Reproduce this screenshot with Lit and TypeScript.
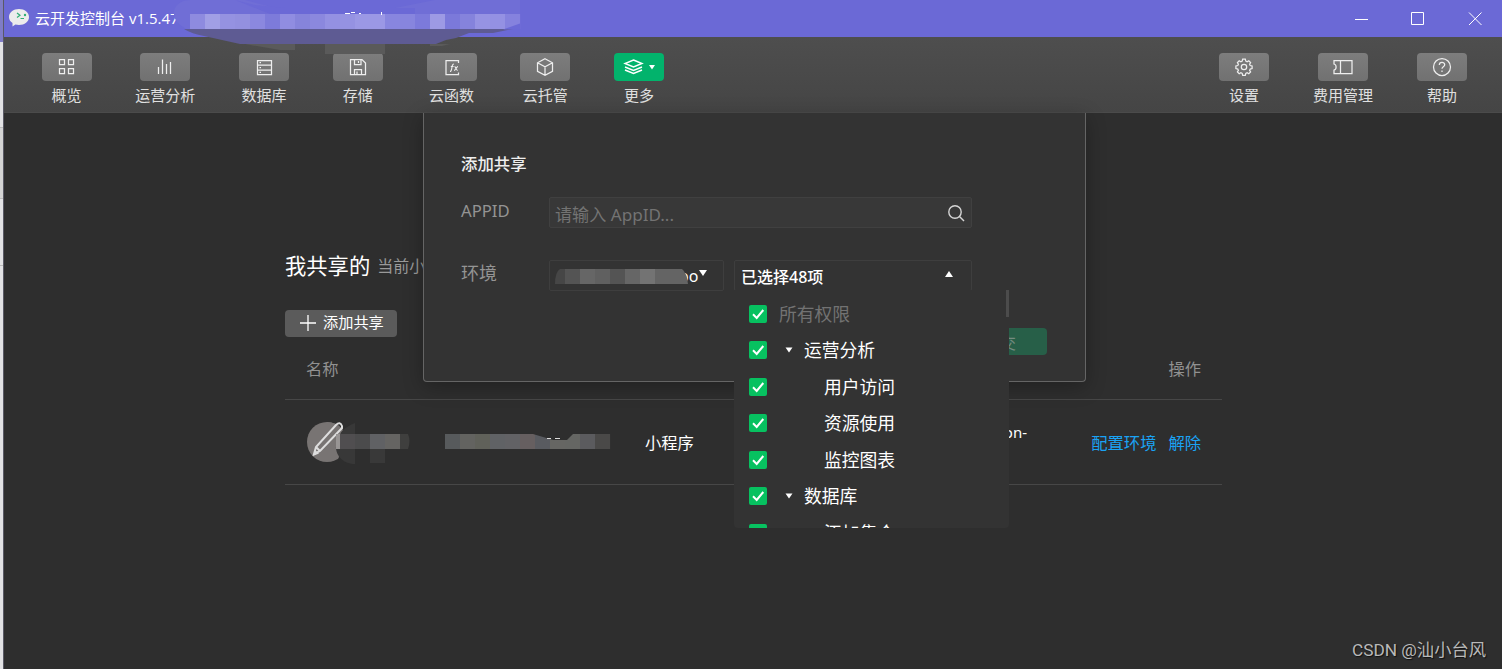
import { LitElement, html, css, svg } from "lit";
import { customElement, property } from "lit/decorators.js";
import { classMap } from "lit/directives/class-map.js";

const icons: Record<string, unknown> = {
  overview: svg`<path d="M4.500 4.500h5v5h-5zM13.500 4.500h5v5h-5zM4.500 13.500h5v5h-5zM13.500 13.500h5v5h-5z"/>`,
  chart: svg`<path d="M5.500 12v7M9.500 4.500v14.500M13.500 9v10M17.500 7v12"/>`,
  database: svg`<path d="M5.500 5.500h14v14h-14zM5.500 10h14M5.500 15h14M7.500 7.700h1.500M7.500 12.500h1.500M7.500 17.300h1.500"/>`,
  disk: svg`<path d="M4.500 4.500h11.500l3.500 3.500v11.500h-15zM8.500 4.500v5h6.500v-5M12.500 6v2M8.500 19v-4.500h7v4.500M11 16.500v2.500"/>`,
  fx: svg`<path d="M18.500 8v-2.500h-12.500v14h12.500v-2"/><path d="M10 16.500c1.500 0 1.500-2 1.900-4s.5-3.500 2-3.500M10.800 11.500h2.800M14.500 11.500c1.500 0 1.500 4 3.200 4M18 11.500c-1.500 0-2.500 4-4 4" stroke-width="1.100"/>`,
  cube: svg`<path d="M12 3.800l7.500 4v8.500l-7.500 4-7.500-4v-8.500zM4.500 7.800l7.500 4 7.500-4M12 11.800v8.500"/>`,
  layers: svg`<path d="M11.500 5l8.500 3.500-8.500 3.500-8.500-3.500zM3 12l8.500 3.500 8.500-3.500M3 15l8.500 3.500 8.500-3.500" stroke-width="1.400"/>`,
  gear: svg`<circle cx="12" cy="12" r="2.700"/><path d="M10.700 4.200h2.600l.5 1.900 1.300.6 1.700-1 1.800 1.800-1 1.700.6 1.300 1.900.5v2.600l-1.900.5-.6 1.300 1 1.600-1.800 1.800-1.700-1-1.300.6-.5 1.900h-2.600l-.5-1.900-1.300-.6-1.700 1-1.800-1.800 1-1.600-.6-1.300-1.900-.5v-2.600l1.900-.5.6-1.300-1-1.700 1.800-1.800 1.700 1 1.300-.6z"/>`,
  ticket: svg`<path d="M3 5.500h18v13h-18v-3.300c2.800-.7 2.800-5.500 0-6.200zM9.500 5.500v13"/>`,
  help: svg`<circle cx="12" cy="12" r="8.500"/><path d="M9.300 10c0-3.500 5.400-3.500 5.400-.3 0 2-2.700 2-2.700 4M12 15.400v1.500"/>`,
};

@customElement("tool-button")
class ToolButton extends LitElement {
  @property() icon = "";
  @property() label = "";
  @property({ type: Boolean }) active = false;
  static styles = css`
    :host { display: flex; flex-direction: column; align-items: center; min-width: 50px; }
    .key {
      width: 50px; height: 28px; border-radius: 4px; display: flex;
      align-items: center; justify-content: center;
      background: linear-gradient(#7d7d7d, #717171); color: #eee;
    }
    .key.active { background: #02b36c; color: #fff; gap: 2px; }
    .icon { width: 24px; height: 24px; fill: none; stroke: currentColor; stroke-width: 1.250; }
    .caret { width: 8px; height: 8px; fill: currentColor; }
    .label { font-size: 15px; line-height: 22px; margin-top: 3px; color: #e0e0e0; white-space: nowrap; }
  `;
  render() {
    return html`
      <div class=${classMap({ key: true, active: this.active })}>
        <svg class="icon" viewBox="0 0 24 24">${icons[this.icon]}</svg>
        ${this.active ? html`<svg class="caret" viewBox="0 0 8 8"><path d="M1 2h6l-3 4.500z"/></svg>` : ""}
      </div>
      <div class="label">${this.label}</div>
    `;
  }
}

@customElement("check-row")
class CheckRow extends LitElement {
  @property() label = "";
  @property() kind = "leaf";
  static styles = css`
    :host { display: flex; align-items: center; height: 36.500px; flex: none; }
    .box { width: 18px; height: 18px; flex: none; }
    .arrow { width: 8px; height: 6px; margin-left: 18px; fill: #fff; }
    .text { font-size: 17.800px; line-height: 26px; color: #fff; white-space: nowrap; }
    .all { margin-left: 12px; color: #727272; }
    .group { margin-left: 11px; }
    .leaf { margin-left: 57px; }
  `;
  render() {
    return html`
      <svg class="box" viewBox="0 0 18 18">
        <rect width="18" height="18" rx="2" fill="#07c160"/>
        <path d="M4 9.300l3.700 3.700 6.600-8" fill="none" stroke="#fff" stroke-width="2"/>
      </svg>
      ${this.kind === "group" ? html`<svg class="arrow" viewBox="0 0 8 6"><path d="M.5.5h7l-3.500 5z"/></svg>` : ""}
      <span class="text ${this.kind}">${this.label}</span>
    `;
  }
}

/* Rows of 15px blocks used to redact text. */
const blocks = (colors: string[], x: number, y: number, size = 15) =>
  colors.map((c, i) => svg`<rect x=${x + i * size} y=${y} width=${size + 0.1} height="15" fill=${c}/>`);

@customElement("app-root")
class AppRoot extends LitElement {
  static styles = css`
    :host {
      display: block; position: relative; width: 100%; height: 669px; overflow: hidden;
      font-family: "Noto Sans", "Noto Sans CJK SC", sans-serif; color: #fff; background: #2e2e2e;
    }
    * { box-sizing: border-box; }
    .frame { display: flex; height: 100%; }
    .edge { width: 4px; flex: none; display: flex; flex-direction: column; border-right: 1px solid #5a5a66; background: #e2e2e4; }
    .edge-top { height: 42px; background: #7f7cc6; }
    .edge-item { height: 86px; border-bottom: 1px solid #bbb; }
    .edge-item.alt { height: 71px; background: #d4d4d4; }
    .edge-item.last { height: 67px; }
    .window { flex: 1; display: flex; flex-direction: column; min-width: 0; }
    .titlebar { height: 37px; background: #6b69d6; display: flex; align-items: center; padding: 0 20px 0 4px; }
    .logo { width: 22px; height: 20px; margin-top: -1px; }
    .title { font-family: "Open Sans", "Noto Sans CJK SC", sans-serif; font-size: 15px; line-height: 22px; margin: -2px 0 0 5px; flex: 1; white-space: nowrap; }
    .controls { display: flex; gap: 43px; }
    .control { width: 14px; height: 14px; fill: none; stroke: #fff; stroke-width: 1; }
    .toolbar {
      height: 76px; padding: 16px 35px 0 37.550px; display: flex; justify-content: space-between;
      background: linear-gradient(#4e4e4e, #454545); border-bottom: 1px solid #4b4b4b;
    }
    .tools { display: flex; gap: 43.750px; }
    .tools.end { gap: 44px; }
    .page { padding: 138px 280px 0 281px; display: flex; flex-direction: column; align-items: flex-start; }
    .heading { display: flex; align-items: center; height: 30px; gap: 7px; white-space: nowrap; }
    .h-main { font-size: 21.300px; line-height: 30px; }
    .h-sub { font-size: 16px; line-height: 24px; color: #999; }
    .add { margin-top: 29px; width: 112px; height: 27px; border-radius: 4px; background: #5b5b5b; display: flex; align-items: center; padding-left: 14px; gap: 6px; }
    .add-text { font-size: 15.200px; line-height: 22px; margin-top: -3px; white-space: nowrap; }
    .plus { width: 18px; height: 18px; stroke: #fff; stroke-width: 1.300; margin-top: -1px; }
    .head, .row { width: 937px; display: flex; align-items: center; border-bottom: 1px solid #474747; font-size: 16.300px; white-space: nowrap; }
    .head { height: 63px; justify-content: space-between; color: #919191; padding: 0 21px 1px; }
    .row { height: 85px; padding: 0 21px; }
    .mask-name { width: 139px; height: 50px; }
    .mask-id { width: 200px; height: 20px; margin-top: 1px; }
    .kind { width: 340px; }
    .env { width: 60px; text-align: right; margin: 0 0 20px -18px; font-size: 15px; }
    .ops { display: flex; gap: 12px; margin-left: auto; color: #1aa3f5; }

    .dialog {
      position: absolute; left: 423px; top: 113px; width: 663px; height: 269px; background: #333;
      border: 1px solid #656565; border-top: 0; border-radius: 0 0 4px 4px;
      box-shadow: 0 5px 20px rgba(0, 0, 0, .28); padding: 39px 38px 0 37px;
      display: flex; flex-direction: column;
    }
    .d-title { font-size: 16.400px; line-height: 24px; font-weight: 500; color: #eee; }
    .field { display: flex; }
    .f-app { margin-top: 21px; }
    .f-env { margin-top: 32px; }
    .name { width: 88px; font-size: 16.700px; line-height: 28px; color: #949494; }
    .n-env { font-size: 18px; line-height: 27px; }
    .input { width: 423px; height: 31px; border: 1px solid #404040; background: #383838; display: flex; align-items: center; justify-content: space-between; padding: 2px 6px 0 5px; font-size: 17.100px; color: #737373; border-radius: 2px; }
    .search { width: 18px; height: 18px; fill: none; stroke: #d5d5d5; stroke-width: 1.400; margin-top: -2px; }
    .select { height: 31px; border: 1px solid #3e3e3e; border-radius: 2px; display: flex; align-items: center; }
    .s-env { width: 175px; padding-left: 5px; }
    .s-perm { width: 238px; margin-left: 10px; padding: 1px 17px 0 6px; justify-content: space-between; font-size: 16px; font-weight: 500; }
    .mask-env { width: 133px; height: 16px; position: relative; z-index: 1; }
    .o { font-size: 16px; line-height: 20px; margin-left: -9px; }
    .tri { width: 10px; height: 8px; fill: #fff; margin-top: -5px; }
    .submit { align-self: flex-end; width: 94px; height: 27px; margin-top: 37px; border-radius: 4px; background: #275f48; color: #748b80; font-size: 16px; display: flex; align-items: center; justify-content: center; }

    .menu {
      position: absolute; left: 734px; top: 290px; width: 275px; height: 238px; overflow: hidden;
      background: #333; border-radius: 0 0 4px 4px; padding: 5.600px 15px 0; display: flex; flex-direction: column;
    }
    .thumb { position: absolute; right: 0; top: 0; width: 3px; height: 27px; background: #4c4c4c; }
    .title-mask { position: absolute; left: 170px; top: 0; width: 360px; height: 60px; }
    .watermark { position: absolute; right: 16px; bottom: 6px; font-family: "Roboto", "Noto Sans CJK SC", sans-serif; font-size: 17.300px; line-height: 26px; color: #b9b9b9; text-shadow: 1px 1px 1px #111; white-space: nowrap; }
  `;

  render() {
    const left: [string, string][] = [
      ["overview", "概览"], ["chart", "运营分析"], ["database", "数据库"], ["disk", "存储"],
      ["fx", "云函数"], ["cube", "云托管"], ["layers", "更多"],
    ];
    const right: [string, string][] = [["gear", "设置"], ["ticket", "费用管理"], ["help", "帮助"]];
    const rows: [string, string][] = [
      ["所有权限", "all"], ["运营分析", "group"], ["用户访问", "leaf"], ["资源使用", "leaf"],
      ["监控图表", "leaf"], ["数据库", "group"], ["添加集合", "leaf"],
    ];
    return html`
      <div class="frame">
        <div class="edge">
          <div class="edge-top"></div>
          <div class="edge-item"></div>
          <div class="edge-item alt"></div>
          <div class="edge-item last"></div>
        </div>
        <div class="window">
          <div class="titlebar">
            <svg class="logo" viewBox="0 0 22 20">
              <path d="M11 1c5.600 0 10 3.300 10 8s-4.400 8-10 8c-1.300 0-2.500-.2-3.600-.5L4.500 18.500v-3.500C2.300 13.600 1 11.500 1 9c0-4.700 4.400-8 10-8z" fill="#ececec"/>
              <path d="M9 5l3 2.300-3 2.200M12.500 10.500h3.500" fill="none" stroke="#2fae74" stroke-width="1.200"/>
              <circle cx="17" cy="7" r="1.200" fill="#2fae74"/>
            </svg>
            <div class="title">云开发控制台 v1.5.47</div>
            <div class="controls">
              <svg class="control" viewBox="0 0 14 14"><path d="M1 7.500h13"/></svg>
              <svg class="control" viewBox="0 0 14 14"><path d="M.5 .5h12v12h-12z"/></svg>
              <svg class="control" viewBox="0 0 14 14"><path d="M1 .5l12.500 12.500M13.500 .5L1 13"/></svg>
            </div>
          </div>
          <div class="toolbar">
            <div class="tools">
              ${left.map(([i, l]) => html`<tool-button icon=${i} label=${l} ?active=${i === "layers"}></tool-button>`)}
            </div>
            <div class="tools end">
              ${right.map(([i, l]) => html`<tool-button icon=${i} label=${l}></tool-button>`)}
            </div>
          </div>
          <div class="page">
            <div class="heading"><span class="h-main">我共享的</span><span class="h-sub">当前小程序</span></div>
            <div class="add">
              <svg class="plus" viewBox="0 0 18 18"><path d="M1 9h16M9 1v16"/></svg>
              <span class="add-text">添加共享</span>
            </div>
            <div class="head"><span>名称</span><span>操作</span></div>
            <div class="row">
              <svg class="mask-name" viewBox="0 0 139 50">
                <circle cx="21" cy="25" r="20" fill="#787473"/>
                <path d="M34 32h8v14H32z" fill="#2e2e2e"/>
                <path d="M49 6v41c-13 0-20-10-19-19 1-12 9-18 19-22z" fill="#383838"/>
                <path d="M21 5a20 20 0 0 1 15 7L30 30H21z" fill="#787473"/>
                <rect x="64" y="30" width="15" height="16" fill="#393939"/>
                <path d="M8 37l2-7 20-22q4-4 6 1L36 11 14 34zM10 30l4 4" fill="none" stroke="#ddd" stroke-width="2"/>
                <path d="M7 39l2-6 4 3.500z" fill="#ddd"/>
                <rect x="30" y="17" width="4" height="15" fill="#989594"/>
                ${blocks(["#504e50", "#4b4b4c", "#606164", "#656462"], 34, 17)}
                <path d="M94 17h8q3 7 0 15h-8z" fill="#3f3f3e"/>
              </svg>
              <svg class="mask-id" viewBox="0 0 200 20">
                ${blocks(["#575a5c", "#636360", "#60615a", "#606265", "#626265", "#665f60", "#595b60", "#666663", "#656663", "#5b5b5e", "#4a4948"], 0, 1)}
                <path d="M88 0v1l10 3 10 3h14l6-6V0z" fill="#2e2e2e"/>
                <path d="M102 5.500h4M110 5.500h5" stroke="#ddd"/>
              </svg>
              <span class="kind">小程序</span>
              <span class="env">on-</span>
              <span class="ops"><span>配置环境</span><span>解除</span></span>
            </div>
          </div>
        </div>
      </div>

      <svg class="title-mask" viewBox="0 0 360 60">
        <path d="M75 44h50v6h-15zM155 44h60v10h-60zM260 44h20l-8 2h-12z" fill="#5a5a5a"/>
        <path d="M5 8Q10 0 20 0h55l30 8h120L265 0h85v14H345v15H16Q0 20 5 8z" fill="#706ed6"/>
        <path d="M65 0l20 5 30 3h130V14H100z" fill="#6b69d6"/>
        <path d="M14 29h329l-20 4h-24l-13 5-10 2-10 4H70l-18-4-18-4Q22 34 14 29z" fill="#5e5b93"/>
        ${blocks(["#8e8bdf", "#a19fe5", "#9592e1", "#9390df", "#8b88df", "#7d7bda", "#908de1", "#8684db", "#8b88de", "#9491e2", "#9592e2", "#9b98e5", "#9b98e5", "#8886df", "#8785de", "#7c7adb", "#9d9ae4", "#7b79da", "#8583dc", "#9693e3", "#9491e3", "#8582de"], 20, 14)}
        <path d="M333 29.500l17-6v6z" fill="#6b69d6"/>
        <path d="M175 13.500h5M181 12.500h4M189 13.500h2M211.500 12v3" stroke="#fff"/>
      </svg>

      <div class="dialog">
        <div class="d-title">添加共享</div>
        <div class="field f-app">
          <div class="name">APPID</div>
          <div class="input">
            <span>请输入 AppID...</span>
            <svg class="search" viewBox="0 0 18 18"><circle cx="8" cy="8" r="6.200"/><path d="M12.500 12.500l4.500 4.500"/></svg>
          </div>
        </div>
        <div class="field f-env">
          <div class="name n-env">环境</div>
          <div class="select s-env">
            <svg class="mask-env" viewBox="0 0 133 16">
              <path d="M0 16q0-12 5-15h6v15z" fill="#464646"/>
              ${blocks(["#545454", "#666", "#606060", "#545454", "#666", "#737373", "#646464"], 10, 1)}
              <path d="M115 1h12q5 4 6 15h-18z" fill="#646464"/>
            </svg>
            <span class="o">oo</span>
            <svg class="tri" viewBox="0 0 10 8"><path d="M1 1h8l-4 6z"/></svg>
          </div>
          <div class="select s-perm">
            <span>已选择48项</span>
            <svg class="tri" viewBox="0 0 10 8"><path d="M1 7h8l-4-6z"/></svg>
          </div>
        </div>
        <div class="submit">提交</div>
      </div>

      <div class="menu">
        ${rows.map(([l, k]) => html`<check-row label=${l} kind=${k}></check-row>`)}
        <div class="thumb"></div>
      </div>
      <div class="watermark">CSDN @汕小台风</div>
    `;
  }
}
